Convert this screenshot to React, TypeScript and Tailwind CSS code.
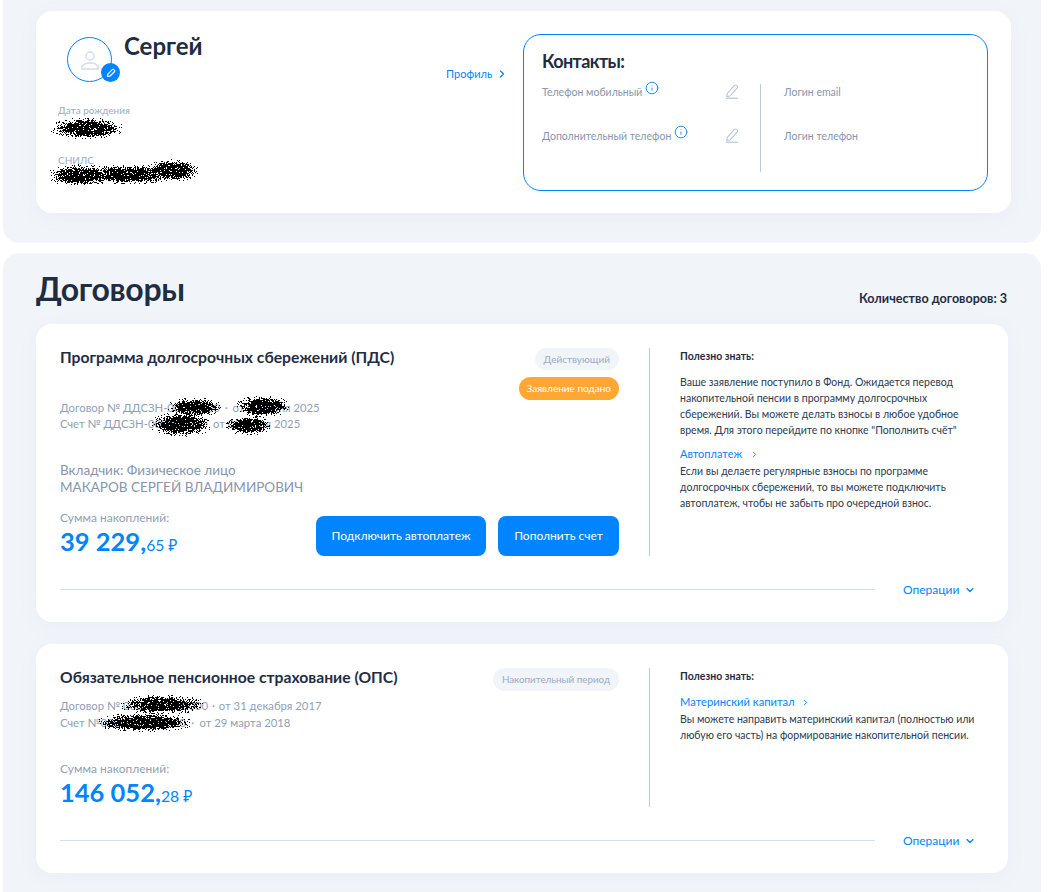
import React from "react";
import { ChevronDown, ChevronRight, Info } from "lucide-react";

type Blob = [number, number, number, number];

function Scribble({ w, h, blobs, seed, className }: { w: number; h: number; blobs: Blob[]; seed: number; className: string }) {
  let s = seed;
  const rnd = () => {
    s = (s * 1664525 + 1013904223) % 4294967296;
    return s / 4294967296;
  };
  let d = "";
  for (let y = 0; y < h; y++) {
    for (let x = 0; x < w; x++) {
      let p = 0;
      for (const [cx, cy, rx, ry] of blobs) {
        const q = ((x - cx) / rx) ** 2 + ((y - cy) / ry) ** 2;
        p = Math.max(p, q < 0.4 ? 0.9 : q < 1 ? 0.9 - (q - 0.4) * 1.0 : q < 1.5 ? 0.14 : 0);
      }
      if (rnd() < p) d += `M${x} ${y}h1v1h-1z`;
    }
  }
  return (
    <svg width={w} height={h} className={className}>
      <path d={d} fill="#000" />
    </svg>
  );
}

function PenIcon({ className }: { className: string }) {
  return (
    <svg viewBox="0 0 14 16" width="14" height="16" fill="none" className={className}>
      <path d="M2.200 10.600 9.400 2.400a1.400 1.400 0 0 1 2-.1l.7.6a1.400 1.400 0 0 1 .1 2L5 13l-3.200.6z" stroke="currentColor" strokeWidth="1.100" strokeLinejoin="round" />
      <path d="M0.800 15.200h12.400" stroke="currentColor" strokeWidth="1.200" />
    </svg>
  );
}

function Contact({ label, className }: { label: string; className: string }) {
  return (
    <div className={`flex items-start justify-between ${className}`}>
      <div className="flex items-start text-[10.500px] leading-[16px] text-[#8796ad]">
        <span className="mt-[1px]">{label}</span>
        <Info size={14} strokeWidth={1.500} className="ml-[3px] mt-[-2px] text-[#0084ff]" />
      </div>
      <PenIcon className="text-[#b8c6d9]" />
    </div>
  );
}

function Operations({ className }: { className?: string }) {
  return (
    <div className={`flex items-start ${className ?? ""}`}>
      <div className="mt-[9px] h-px w-[815px] bg-[#d5dfea]" />
      <div className="ml-[28px] flex items-center text-[12px] leading-[20px] text-[#0084ff]">
        Операции
        <ChevronDown size={12} strokeWidth={2.500} className="ml-[5px]" />
      </div>
    </div>
  );
}

function Amount({ whole, cents }: { whole: string; cents: string }) {
  return (
    <div className="mt-[-1px] flex items-baseline text-[#0084ff]">
      <span className="text-[25.500px] leading-[32px] font-bold">{whole},</span>
      <span className="text-[15.700px] leading-[32px]">{cents} ₽</span>
    </div>
  );
}

export default function App() {
  return (
    <div className="relative h-[892px] w-[1048px] overflow-hidden bg-white font-['Lato','Noto_Sans',sans-serif] text-[#1f2d43]">
      <div className="ml-[3px] h-[243px] w-[1038px] rounded-b-[16px] bg-[#f1f4f9] pl-[33px] pt-[11px]">
        <div className="flex h-[202px] w-[975px] rounded-[16px] bg-white shadow-[0_4px_20px_rgba(130,150,180,0.06)]">
          <div className="relative w-[487px] shrink-0">
            <div className="ml-[31px] mt-[26px] flex items-start">
              <div className="relative flex h-[45px] w-[45px] items-center justify-center rounded-full border border-[#0084ff]">
                <svg width="20" height="20" viewBox="0 0 20 20" fill="none" stroke="#d3dcea" strokeWidth="1.300">
                  <circle cx="10" cy="6" r="4" />
                  <path d="M1.500 19c0-4.500 3.500-6 8.500-6s8.500 1.500 8.500 6z" strokeLinejoin="round" />
                </svg>
                <div className="absolute left-[33px] top-[25px] flex h-[19px] w-[19px] items-center justify-center rounded-full bg-[#0084ff]">
                  <svg width="10" height="10" viewBox="0 0 10 10" fill="none" stroke="#fff" strokeWidth="1.200">
                    <path d="M1.500 8.500 1.800 6.200 6.300 1.600a1.100 1.100 0 0 1 1.600 0l.5.5a1.100 1.100 0 0 1 0 1.600L3.800 8.200z" strokeLinejoin="round" />
                  </svg>
                </div>
              </div>
              <div className="ml-[12px] mt-[-6px] text-[24px] leading-[30px] font-bold text-[#1f2d43]">Сергей</div>
            </div>
            <div className="absolute left-[410px] top-[56px] flex items-center text-[11px] leading-[14px] text-[#0084ff]">
              Профиль
              <ChevronRight size={12} strokeWidth={2.500} className="ml-[4px]" />
            </div>
            <div className="ml-[22px] mt-[22px] text-[10px] leading-[13px] text-[#9babc2]">Дата рождения</div>
            <div className="relative h-[37px]">
              <Scribble w={72} h={24} seed={11} className="absolute left-[15px] top-[-1px]" blobs={[[36, 12, 31, 9]]} />
            </div>
            <div className="ml-[22px] text-[10px] leading-[13px] text-[#9babc2]">СНИЛС</div>
            <div className="relative">
              <Scribble w={148} h={26} seed={77} className="absolute left-[14px] top-[-8px]" blobs={[[30, 16, 28, 9], [78, 15, 40, 8], [122, 11, 24, 9]]} />
            </div>
          </div>
          <div className="mt-[23px] h-[157px] w-[465px] rounded-[18px] border border-[#0084ff] pl-[18px] pt-[15px]">
            <div className="text-[18px] leading-[22px] font-bold tracking-[-0.600px] text-[#1f2d43]">Контакты:</div>
            <div className="mt-[7px] flex">
              <div className="w-[197px]">
                <Contact label="Телефон мобильный" className="h-[45px] pt-[4px]" />
                <Contact label="Дополнительный телефон" className="pt-[3px]" />
              </div>
              <div className="ml-[21px] mt-[5px] h-[88px] w-px bg-[#bccad9]" />
              <div className="ml-[23px] text-[10.500px] leading-[16px] text-[#8796ad]">
                <div className="h-[45px] pt-[5px]">Логин email</div>
                <div className="pt-[4px]">Логин телефон</div>
              </div>
            </div>
          </div>
        </div>
      </div>

      <div className="ml-[3px] mt-[10px] h-[660px] w-[1038px] rounded-[16px] bg-[#f1f4f9] px-[33px]">
        <div className="flex h-[71px] items-end justify-between pr-[1px]">
          <div className="mb-[15px] text-[32px] leading-[41px] font-bold tracking-[-0.300px] text-[#1f2d43]">Договоры</div>
          <div className="mb-[17px] text-[12.600px] leading-[16px] font-bold text-[#1f2d43]">Количество договоров: 3</div>
        </div>

        <div className="h-[298px] w-[972px] rounded-[16px] bg-white px-[24px] pt-[24px] shadow-[0_4px_20px_rgba(130,150,180,0.06)]">
          <div className="flex h-[208px]">
            <div className="relative w-[559px]">
              <div className="flex items-start justify-between">
                <div className="mt-[-3px] text-[15.700px] leading-[24px] font-bold text-[#1f2d43]">Программа долгосрочных сбережений (ПДС)</div>
                <div className="flex flex-col items-end gap-[7px]">
                  <div className="flex h-[22px] items-center rounded-full bg-[#f1f4f9] px-[9px] text-[10px] text-[#9babc2]">Действующий</div>
                  <div className="flex h-[23px] items-center rounded-full bg-[#ffa733] px-[8px] text-[10px] text-white">Заявление подано</div>
                </div>
              </div>
              <div className="text-[11.300px] leading-[16px] text-[#8f9fb6]">
                <div className="relative">
                  Договор № ДДСЗН-00000000 <span className="mx-[2px]">·</span> от 00 июня 2025
                  <Scribble w={54} h={22} seed={5} className="absolute left-[107px] top-[-4px]" blobs={[[27, 11, 23, 8]]} />
                  <Scribble w={52} h={24} seed={9} className="absolute left-[177px] top-[-6px]" blobs={[[26, 12, 23, 9]]} />
                </div>
                <div className="relative">
                  Счет № ДДСЗН-00000000 <span className="mx-[2px]">·</span> от 00 июня 2025
                  <Scribble w={58} h={26} seed={21} className="absolute left-[92px] top-[-5px]" blobs={[[29, 13, 26, 10]]} />
                  <Scribble w={44} h={22} seed={31} className="absolute left-[166px] top-[-2px]" blobs={[[22, 11, 19, 8]]} />
                </div>
              </div>
              <div className="mt-[30px] text-[13.500px] leading-[17px] text-[#8796ad]">
                <div>Вкладчик: Физическое лицо</div>
                <div>МАКАРОВ СЕРГЕЙ ВЛАДИМИРОВИЧ</div>
              </div>
              <div className="mt-[14px] flex items-start justify-between">
                <div>
                  <div className="text-[12px] leading-[16px] text-[#8f9fb6]">Сумма накоплений:</div>
                  <Amount whole="39 229" cents="65" />
                </div>
                <div className="mt-[6px] flex gap-[12px]">
                  <div className="flex h-[40px] w-[170px] items-center justify-center rounded-[8px] bg-[#0084ff] text-[12px] text-white">Подключить автоплатеж</div>
                  <div className="flex h-[40px] w-[121px] items-center justify-center rounded-[8px] bg-[#0084ff] text-[12px] text-white">Пополнить счет</div>
                </div>
              </div>
            </div>
            <div className="ml-[30px] h-full w-px bg-[#bccad9]" />
            <div className="ml-[30px] w-[296px] text-[10.500px] leading-[16px] text-[#2c3a50]">
              <div className="font-bold text-[#1f2d43]">Полезно знать:</div>
              <div className="mt-[10px]">Ваше заявление поступило в Фонд. Ожидается перевод накопительной пенсии в программу долгосрочных сбережений. Вы можете делать взносы в любое удобное время. Для этого перейдите по кнопке "Пополнить счёт"</div>
              <div className="mt-[9px] flex items-center text-[11px] leading-[14px] text-[#0084ff]">
                Автоплатеж
                <ChevronRight size={9} strokeWidth={2.500} className="ml-[8px]" />
              </div>
              <div className="mt-[2px]">Если вы делаете регулярные взносы по программе долгосрочных сбережений, то вы можете подключить автоплатеж, чтобы не забыть про очередной взнос.</div>
            </div>
          </div>
          <Operations className="mt-[24px]" />
        </div>

        <div className="mt-[22px] h-[229px] w-[972px] rounded-[16px] bg-white px-[24px] pt-[24px] shadow-[0_4px_20px_rgba(130,150,180,0.06)]">
          <div className="flex h-[139px]">
            <div className="relative w-[559px]">
              <div className="flex items-start justify-between">
                <div className="mt-[-3px] text-[15.700px] leading-[24px] font-bold text-[#1f2d43]">Обязательное пенсионное страхование (ОПС)</div>
                <div className="flex h-[23px] items-center rounded-full bg-[#f1f4f9] px-[9px] text-[9.800px] text-[#9babc2]">Накопительный период</div>
              </div>
              <div className="mt-[6px] text-[11.300px] leading-[17px] text-[#8f9fb6]">
                <div className="relative">
                  Договор № 0000000000000 <span className="mx-[1px]">·</span> от 31 декабря 2017
                  <Scribble w={82} h={22} seed={41} className="absolute left-[61px] top-[-4px]" blobs={[[41, 11, 37, 8]]} />
                </div>
                <div className="relative">
                  Счет №0000000000000 <span className="mx-[2.500px]">·</span> от 29 марта 2018
                  <Scribble w={92} h={24} seed={51} className="absolute left-[38px] top-[-4px]" blobs={[[46, 12, 42, 8]]} />
                </div>
              </div>
              <div className="mt-[30px] text-[12px] leading-[16px] text-[#8f9fb6]">Сумма накоплений:</div>
              <Amount whole="146 052" cents="28" />
            </div>
            <div className="ml-[30px] h-full w-px bg-[#bccad9]" />
            <div className="ml-[30px] w-[296px] text-[10.500px] leading-[16px] text-[#2c3a50]">
              <div className="font-bold text-[#1f2d43]">Полезно знать:</div>
              <div className="mt-[11px] flex items-center text-[11.200px] leading-[14px] text-[#0084ff]">
                Материнский капитал
                <ChevronRight size={9} strokeWidth={2.500} className="ml-[6px]" />
              </div>
              <div className="mt-[2px]">Вы можете направить материнский капитал (полностью или любую его часть) на формирование накопительной пенсии.</div>
            </div>
          </div>
          <Operations className="mt-[24px]" />
        </div>
      </div>
    </div>
  );
}
